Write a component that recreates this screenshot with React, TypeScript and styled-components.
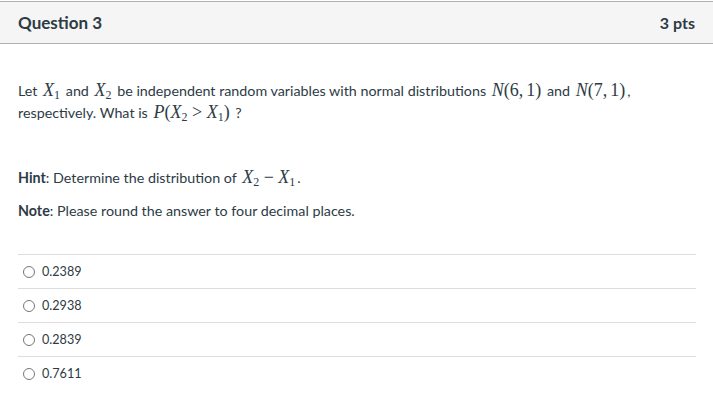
import styled, { createGlobalStyle } from "styled-components";

const GlobalStyle = createGlobalStyle`
  body {
    margin: 0;
    background: #ffffff;
    font-family: Lato, "Open Sans", sans-serif;
    color: #2d3b45;
  }
`;

const Panel = styled.div`
  padding-top: 1px;
  width: 713px;
`;

const Header = styled.div`
  display: flex;
  justify-content: space-between;
  align-items: center;
  height: 41px;
  padding: 0 18px;
  background: #f5f5f5;
  border-top: 1px solid #b0b0b0;
  border-bottom: 1px solid #b0b0b0;
`;

const Title = styled.div`
  font-size: 17px;
  font-weight: 700;
`;

const Points = styled.div`
  font-size: 16px;
  font-weight: 700;
`;

const Body = styled.div`
  padding: 36px 18px 0 18px;
  font-size: 14.3px;
`;

const Paragraph = styled.p<{ $gap?: number }>`
  margin: 0 0 ${(p) => p.$gap ?? 0}px 0;
  line-height: 22px;
`;

const Math = styled.span`
  font-family: "Liberation Serif", "DejaVu Serif", serif;
  font-style: italic;
  font-size: 18px;
  line-height: 1;
  padding: 0 2px;
`;

const Upright = styled.span`
  font-style: normal;
`;

const Sub = styled.sub`
  font-style: normal;
  font-size: 12px;
  vertical-align: -3px;
  line-height: 0;
`;

const Options = styled.div`
  margin-top: 32px;
  width: 678px;
`;

const OptionRow = styled.label`
  display: flex;
  align-items: center;
  gap: 7px;
  height: 33px;
  padding-left: 5px;
  border-top: 1px solid #dddddd;
`;

const Radio = styled.span`
  display: inline-block;
  width: 10px;
  height: 10px;
  border: 1px solid #777777;
  border-radius: 50%;
`;

const OptionText = styled.span`
  font-size: 12.6px;
`;

const X = ({ i }: { i: number }) => (
  <>
    X<Sub>{i}</Sub>
  </>
);

const answers = ["0.2389", "0.2938", "0.2839", "0.7611"];

export default function App() {
  return (
    <Panel>
      <GlobalStyle />
      <Header>
        <Title>Question 3</Title>
        <Points>3 pts</Points>
      </Header>
      <Body>
        <Paragraph $gap={43}>
          Let <Math><X i={1} /></Math> and <Math><X i={2} /></Math> be independent random
          variables with normal distributions{" "}
          <Math>
            N<Upright>(6,&#8198;1)</Upright>
          </Math>{" "}
          and{" "}
          <Math>
            N<Upright>(7,&#8198;1)</Upright>
          </Math>
          ,
          <br />
          respectively. What is{" "}
          <Math>
            P<Upright>(</Upright><X i={2} /> <Upright>&gt;</Upright> <X i={1} /><Upright>)</Upright>
          </Math>{" "}
          ?
        </Paragraph>
        <Paragraph $gap={11}>
          <b>Hint</b>: Determine the distribution of{" "}
          <Math>
            <X i={2} /> <Upright>−</Upright> <X i={1} />
          </Math>
          .
        </Paragraph>
        <Paragraph>
          <b>Note</b>: Please round the answer to four decimal places.
        </Paragraph>
        <Options>
          {answers.map((a) => (
            <OptionRow key={a}>
              <Radio />
              <OptionText>{a}</OptionText>
            </OptionRow>
          ))}
        </Options>
      </Body>
    </Panel>
  );
}
